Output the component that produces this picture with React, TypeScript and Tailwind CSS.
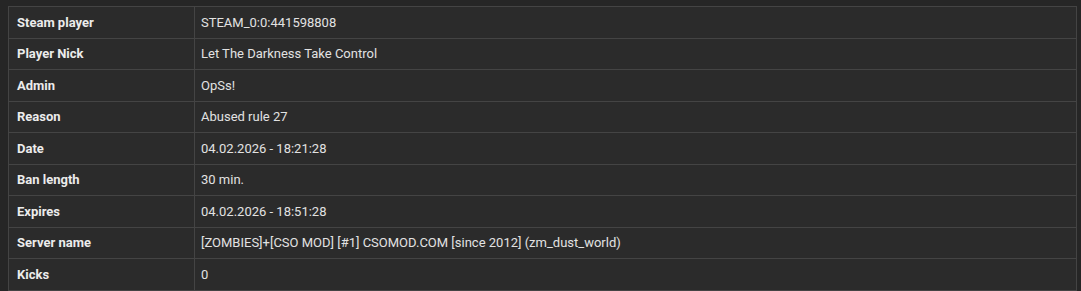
const rows: [string, string][] = [
  ["Steam player", "STEAM_0:0:441598808"],
  ["Player Nick", "Let The Darkness Take Control"],
  ["Admin", "OpSs!"],
  ["Reason", "Abused rule 27"],
  ["Date", "04.02.2026 - 18:21:28"],
  ["Ban length", "30 min."],
  ["Expires", "04.02.2026 - 18:51:28"],
  ["Server name", "[ZOMBIES]+[CSO MOD] [#1] CSOMOD.COM [since 2012] (zm_dust_world)"],
  ["Kicks", "0"],
];

export default function App() {
  return (
    <div
      className="w-[1081px] h-[291px] bg-[#262626] pt-[6px] pl-[8px] overflow-hidden"
      style={{ fontFamily: "Roboto, 'Noto Sans', sans-serif" }}
    >
      <table className="w-[1069px] border-collapse bg-[#2b2b2b] text-[13px] leading-[15px]">
        <tbody>
          {rows.map(([label, value]) => (
            <tr key={label} className="h-[31.5px]">
              <td className="w-[186px] border border-[#444444] px-2 py-0 font-bold text-[#ececec]">
                {label}
              </td>
              <td className="border border-[#444444] px-[6px] py-0 text-[#e2e2e2]">
                {value}
              </td>
            </tr>
          ))}
        </tbody>
      </table>
    </div>
  );
}
